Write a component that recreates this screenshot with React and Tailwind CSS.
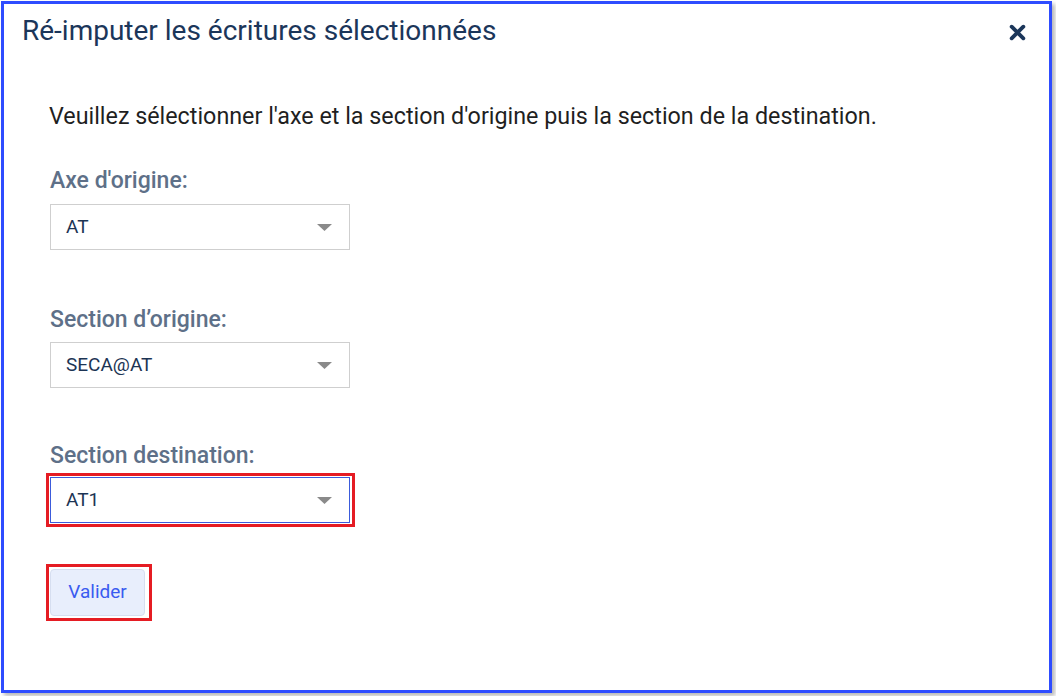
import React from "react";

const fields = [
  { label: "Axe d'origine:", value: "AT", labelMt: "mt-[37px]", selectMt: "mt-[9px]" },
  { label: "Section d’origine:", value: "SECA@AT", labelMt: "mt-[56px]", selectMt: "mt-[8px]" },
  {
    label: "Section destination:",
    value: "AT1",
    focused: true,
    labelMt: "mt-[54px]",
    selectMt: "mt-[7px]",
  },
];

const Caret = () => (
  <svg width="15" height="7" viewBox="0 0 15 7" className="shrink-0">
    <path d="M0 0 L15 0 L7.5 7 Z" fill="#8a8a8a" />
  </svg>
);

const Select = ({ value, focused }) => (
  <div
    className={
      "w-[300px] h-[46px] flex items-center justify-between pl-[15px] pr-[17px] bg-white border " +
      (focused ? "border-[#3b5bdb]" : "border-[#cfcfcf]")
    }
  >
    <span className="text-[19px] text-[#1c3454]">{value}</span>
    <Caret />
  </div>
);

export default function App() {
  return (
    <div
      className="w-[1056px] h-[696px] bg-white pt-[1px] pl-[1px]"
      style={{ fontFamily: "Roboto, 'Liberation Sans', sans-serif" }}
    >
      <div className="w-[1051px] h-[692px] border-[3px] border-[#2e4cff] bg-white shadow-[3px_3px_4px_rgba(0,0,0,0.28)] flex flex-col">
        {/* Header */}
        <div className="flex items-center justify-between pt-[11px] pl-[18px] pr-[23px]">
          <h2 className="text-[28px] leading-[32px] text-[#1b365a] font-normal">
            Ré-imputer les écritures sélectionnées
          </h2>
          <svg width="17" height="17" viewBox="0 0 16 16" className="mt-[2px]">
            <path
              d="M2.5 2.5 L13.5 13.5 M13.5 2.5 L2.5 13.5"
              stroke="#1b365a"
              strokeWidth="3.6"
              strokeLinecap="round"
            />
          </svg>
        </div>

        {/* Body */}
        <div className="flex flex-col items-start pl-[46px]">
          <p className="mt-[55px] -ml-[1px] text-[23.3px] leading-[28px] text-[#1f1f1f]">
            Veuillez sélectionner l'axe et la section d'origine puis la section de la destination.
          </p>

          {fields.map((f) => (
            <div key={f.label} className={"flex flex-col " + f.labelMt}>
              <label className="text-[23px] leading-[28px] font-medium text-[#5e7088]">
                {f.label}
              </label>
              <div className={f.selectMt}>
                {f.focused ? (
                  <div className="border-[3px] border-[#e51c23] pl-[1px] pr-[2px] py-[1px] -ml-[4px] -mr-[5px] -my-[4px]">
                    <Select value={f.value} focused />
                  </div>
                ) : (
                  <Select value={f.value} />
                )}
              </div>
            </div>
          ))}

          <div className="mt-[46px]">
            <div className="border-[3px] border-[#e51c23] pl-[1px] pr-[4px] py-[2px] -ml-[4px] -my-[5px]">
              <button
                type="button"
                className="block w-[95px] h-[47px] rounded-[4px] bg-[#e8eefc] border border-[#d6def0] text-[19px] text-[#3a5bf0]"
              >
                Valider
              </button>
            </div>
          </div>
        </div>
      </div>
    </div>
  );
}
